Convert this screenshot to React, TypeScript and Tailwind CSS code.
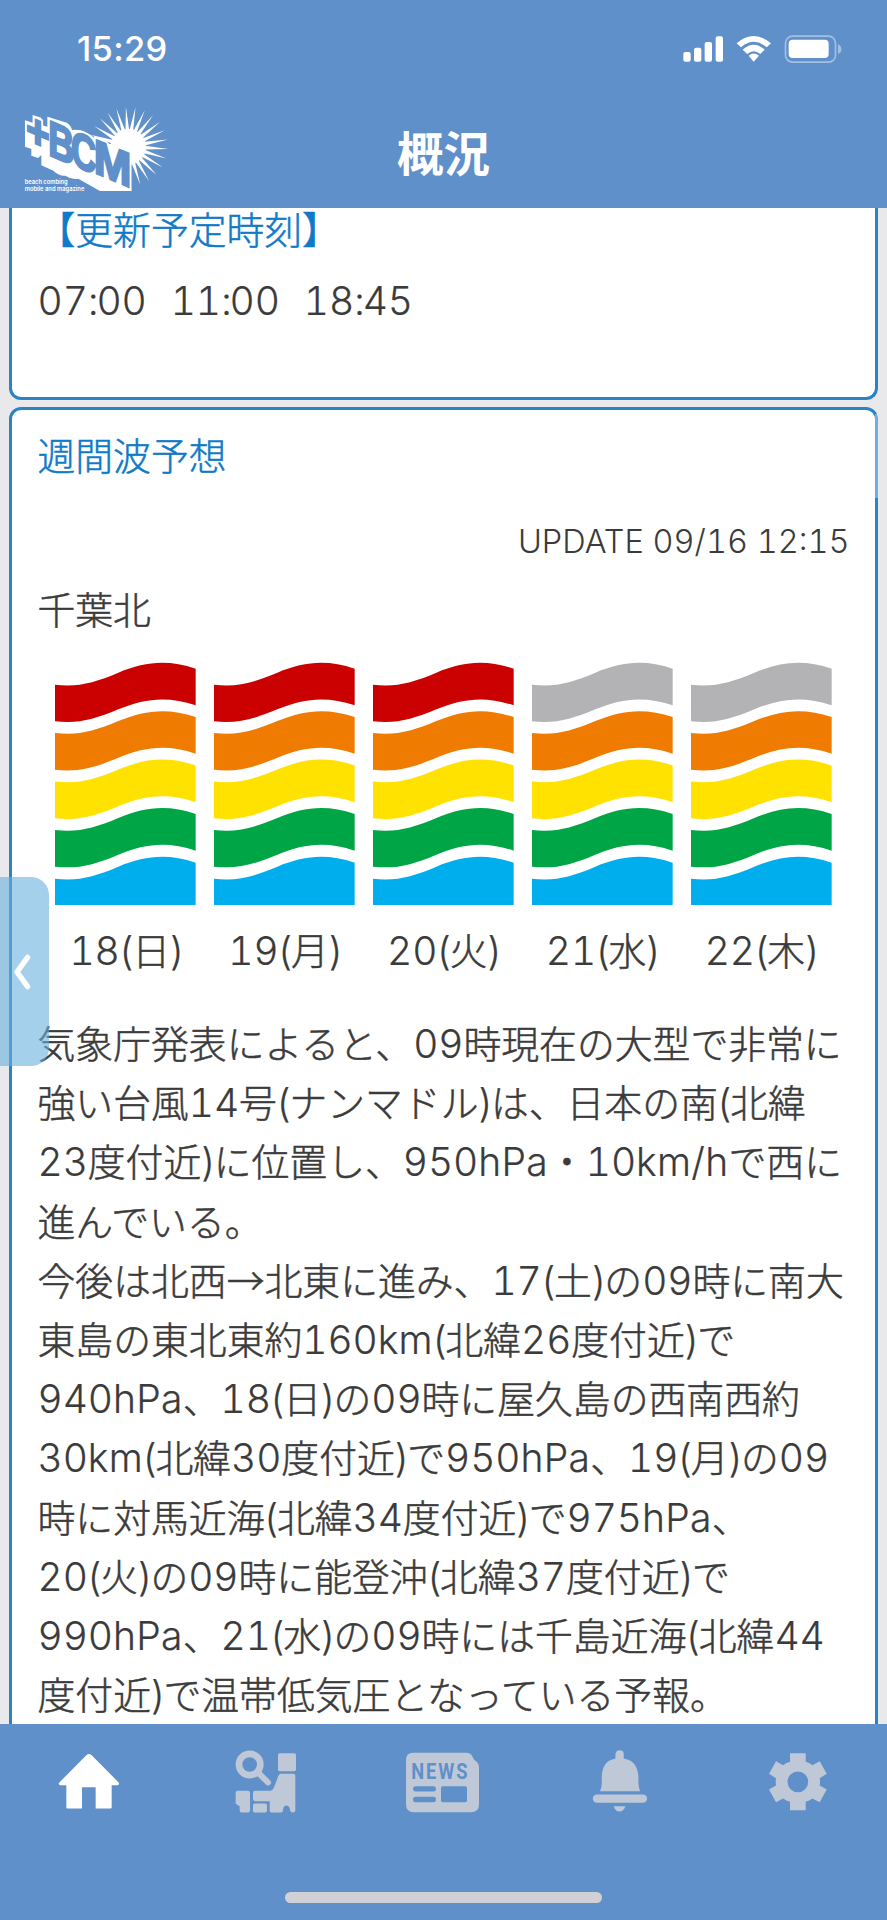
import React from "react";

const days = [
  { label: "18(日)", top: "#cb0000" },
  { label: "19(月)", top: "#cb0000" },
  { label: "20(火)", top: "#cb0000" },
  { label: "21(水)", top: "#b3b3b6" },
  { label: "22(木)", top: "#b3b3b6" },
];

const forecast = [
  "気象庁発表によると、09時現在の大型で非常に",
  "強い台風14号(ナンマドル)は、日本の南(北緯",
  "23度付近)に位置し、950hPa・10km/hで西に",
  "進んでいる。",
  "今後は北西→北東に進み、17(土)の09時に南大",
  "東島の東北東約160km(北緯26度付近)で",
  "940hPa、18(日)の09時に屋久島の西南西約",
  "30km(北緯30度付近)で950hPa、19(月)の09",
  "時に対馬近海(北緯34度付近)で975hPa、",
  "20(火)の09時に能登沖(北緯37度付近)で",
  "990hPa、21(水)の09時には千島近海(北緯44",
  "度付近)で温帯低気圧となっている予報。",
];

const runClass = (part: string) => {
  if (part === ":") return "tracking-[-2.4px]";
  if (part === "(" || part === ")") return "tracking-[-1.2px]";
  if (/[a-z]/i.test(part)) return "tracking-[0.3px]";
  return "tabular-nums tracking-[-0.1px]";
};

// Latin runs are set a little larger than the kana and kanji around them
const Mixed = ({ text }: { text: string }) => (
  <>
    {text.split(/([():]|\d+|[A-Za-z/]+)/).map((part, i) =>
      i % 2 === 1 ? (
        <span
          key={i}
          className={`font-['Inter'] text-[39px] leading-none [-webkit-text-stroke:0.2px] ${runClass(part)}`}
        >
          {part}
        </span>
      ) : (
        part
      )
    )}
  </>
);

const bands = ["#ef7b00", "#ffe200", "#00a645"];

const WaveFlag = ({ top }: { top: string }) => (
  <svg className="h-[244px] w-[141px]" viewBox="0 0 423 732">
    {[top, ...bands].map((color, i) => (
      <path
        key={i}
        transform={`translate(0 ${i * 145.3})`}
        fill={color}
        d="M0 68C70 76 118 62 190 32C270 -2 340 -8 422 20V130C340 102 270 108 190 142C118 172 70 186 0 178Z"
      />
    ))}
    <path fill="#00aeee" d="M0 650C70 658 118 644 190 614C270 580 340 574 422 602V729H0Z" />
  </svg>
);

const rays = Array.from({ length: 26 }, (_, i) => {
  const a = (i * Math.PI * 2) / 26 + 0.06;
  const point = (r: number, t: number) =>
    `${385 + r * Math.cos(t)},${440 + r * Math.sin(t)}`;
  return `${point(50, a - 0.11)} ${point(120, a)} ${point(50, a + 0.11)}`;
});

const letters = [
  { ch: "+", x: 79, y: 430, size: 140, width: 70 },
  { ch: "B", x: 145, y: 464, size: 150, width: 78 },
  { ch: "C", x: 213, y: 493, size: 150, width: 76 },
  { ch: "M", x: 281, y: 517, size: 145, width: 113 },
];

const Word = ({ back }: { back?: boolean }) => (
  <g
    fill={back ? "none" : "#6090ca"}
    stroke={back ? "#fff" : "#6090ca"}
    strokeWidth={back ? 19 : 7}
    fontFamily="'Liberation Sans', sans-serif"
    fontWeight="bold"
  >
    {letters.map((l) => (
      <text
        key={l.ch}
        transform={`matrix(1 .42 0 1 ${l.x} ${l.y})`}
        fontSize={l.size}
        textLength={l.width}
        lengthAdjust="spacingAndGlyphs"
      >
        {l.ch}
      </text>
    ))}
  </g>
);

const Logo = () => (
  <svg className="h-[90px] w-[150px]" viewBox="60 315 450 270">
    <g fill="#fff">
      <circle cx="385" cy="440" r="53" />
      {rays.map((points, i) => (
        <polygon key={i} points={points} />
      ))}
      <path d="M75 361L98 368V345L124 353V375L142 380V350L200 368Q212 374 216 390Q250 385 284 415L391 456V573H300L235 536Q215 540 196 527Q180 530 160 512L124 496V465L114 474L94 467V447L75 440Z" />
    </g>
    <Word back />
    <Word />
    <g fill="#fff" fontFamily="Inter, sans-serif" fontWeight="600" fontSize="19">
      <text x="74" y="552" textLength="129" lengthAdjust="spacingAndGlyphs">
        beach combing
      </text>
      <text x="74" y="573" textLength="179" lengthAdjust="spacingAndGlyphs">
        mobile and magazine
      </text>
    </g>
  </svg>
);

const StatusIcons = () => (
  <svg className="h-[30px] w-[162px]" viewBox="126 100 486 90" fill="#fff">
    <rect x="130" y="154" width="22" height="29" rx="6" />
    <rect x="162" y="141" width="22" height="42" rx="6" />
    <rect x="194" y="124" width="22" height="59" rx="6" />
    <rect x="227" y="107" width="22" height="76" rx="6" />
    <path d="M290 128Q341 84 393 128L380 140Q341 107 303 140Z" />
    <path d="M308 147Q341 118 374 147L361 160Q341 143 322 160Z" />
    <path d="M326 165Q341 152 357 165L341 183Z" />
    <rect x="436.500" y="106.500" width="150" height="78" rx="21" fill="none" stroke="#a3c0e3" strokeWidth="5" />
    <rect x="446" y="117" width="120" height="55" rx="12" />
    <path d="M594 131Q604 135 604 146T594 160Z" fill="#a3c0e3" />
  </svg>
);

const HomeIcon = () => (
  <svg className="h-[67px] w-16" viewBox="170 84 192 200" fill="#fff">
    <path d="M258 105Q266 98 274 105L355 187Q359 194 351 195H334V261Q334 265 330 265H286V201H245V265H202Q198 265 198 261V195H180Q172 194 177 187Z" />
  </svg>
);

const SeatIcon = () => (
  <svg className="h-[67px] w-16" viewBox="702 84 192 200" fill="#bfc8d6">
    <circle cx="749" cy="133" r="32" fill="none" stroke="#bfc8d6" strokeWidth="20" />
    <path d="M775 158L804 187" stroke="#bfc8d6" strokeWidth="18" strokeLinecap="round" />
    <rect x="834" y="99" width="54" height="54" rx="5" />
    <path d="M843 161H880Q886 161 886 167V270Q886 277 879 277Q871 277 870 268Q868 256 858 256Q849 258 849 271Q849 277 843 277H815Q809 277 809 271V243H766Q759 243 759 236V219Q759 212 766 212H811Q818 211 822 202L835 167Q838 161 843 161Z" />
    <path d="M713 212H744Q750 212 750 218V271Q750 277 744 277H725Q719 277 719 271V258L707 251V218Q707 212 713 212Z" />
    <rect x="759" y="250" width="42" height="27" rx="5" />
  </svg>
);

const NewsIcon = () => (
  <svg className="h-[67px] w-[77px]" viewBox="1215 84 231 200">
    <path
      fill="#bfc8d6"
      d="M1240 98H1398Q1414 98 1419 113Q1422 121 1430 125Q1437 131 1437 141V252Q1437 276 1413 276H1242Q1218 276 1218 252V120Q1218 98 1240 98Z"
    />
    <g fill="#6090ca">
      <text
        x="1234"
        y="176"
        fontFamily="Roboto, sans-serif"
        fontWeight="bold"
        fontSize="67"
        letterSpacing="7"
        textLength="174"
        lengthAdjust="spacingAndGlyphs"
      >
        NEWS
      </text>
      <rect x="1239" y="198" width="69" height="16" rx="8" />
      <rect x="1239" y="230" width="69" height="16" rx="8" />
      <rect x="1323" y="198" width="78" height="48" rx="5" />
    </g>
  </svg>
);

const BellIcon = () => (
  <svg className="h-[67px] w-16" viewBox="437.700 144 192 200" fill="#bfc8d6">
    <path d="M517 178V163Q518 150 530 150T542 163V178Z" />
    <path d="M471 273Q476 262 476 248V228Q478 174 530 174T586 228V248Q586 262 591 273Z" />
    <rect x="449" y="283" width="163" height="25" rx="12.500" />
    <path d="M512 318H547Q541 334 529 334T512 318Z" />
  </svg>
);

const GearIcon = () => (
  <svg className="h-[67px] w-16" viewBox="969.900 144 192 200" fill="#bfc8d6">
    <path
      fillRule="evenodd"
      d="M1042 159H1089V185Q1100 188 1109 195L1131 183L1152 221L1131 234Q1133 245 1131 256L1152 268L1131 306L1109 295Q1100 302 1089 305V330H1042V305Q1031 302 1021 295L1000 306L979 268L1000 256Q998 245 1000 234L979 221L1000 183L1021 195Q1031 188 1042 185ZM1065.500 214A31 31 0 1 0 1065.500 276A31 31 0 1 0 1065.500 214Z"
    />
  </svg>
);

const navIcons = [HomeIcon, SeatIcon, NewsIcon, BellIcon, GearIcon];

const App = () => {
  return (
    <div className="relative flex h-[1920px] w-[887px] flex-col overflow-hidden bg-[#e9e8ea] font-['Noto_Sans_CJK_JP',sans-serif] font-light text-[#3b3b3b]">
      {/* Header */}
      <header className="flex h-[208px] shrink-0 flex-col bg-[#6090ca] text-white">
        <div className="flex h-[97px] items-center justify-between pl-[77px] pr-[43px]">
          <span className="font-['Inter'] text-[34.5px] font-medium tracking-[0.3px]">
            15:29
          </span>
          <StatusIcons />
        </div>
        <div className="grid grid-cols-3 items-start">
          <div className="pl-5 pt-2">
            <Logo />
          </div>
          <h1 className="pt-[29px] text-center text-[46.5px] font-bold leading-[50px]">
            概況
          </h1>
        </div>
      </header>

      {/* Scrolled content */}
      <main className="flex h-[1516px] shrink-0 flex-col gap-[7px] overflow-hidden pl-[9px] pr-[9px] [-webkit-text-stroke:0.5px]">
        <section className="h-[192px] shrink-0 rounded-b-xl border-x-[3px] border-b-[3px] border-[#2a83c4] bg-white pl-[25.5px]">
          <h2 className="h-[44px] text-[37.8px] leading-[40px] text-[#0e7ac8]">
            【更新予定時刻】
          </h2>
          <p className="mt-[25px] flex gap-6 text-[37.8px] leading-[44px]">
            <span><Mixed text="07:00" /></span>
            <span><Mixed text="11:00" /></span>
            <span><Mixed text="18:45" /></span>
          </p>
        </section>

        <section className="h-[1400px] shrink-0 rounded-t-xl border-[3px] border-[#2a83c4] bg-white pl-[25.5px] pr-[25.5px]">
          <h2 className="pt-[22px] text-[37.8px] leading-[44px] text-[#0e7ac8]">
            週間波予想
          </h2>
          <p className="mt-[46px] text-right font-['Inter'] text-[32.5px] leading-[40px] tabular-nums [-webkit-text-stroke:0]">
            UPDATE 09/16 12:15
          </p>
          <p className="mt-[24px] text-[37.8px] leading-[44px]">千葉北</p>
          <div className="mt-[32px] grid w-[803px] grid-cols-5 pl-[9px]">
            {days.map((day) => (
              <div className="flex flex-col items-center" key={day.label}>
                <WaveFlag top={day.top} />
                <span className="mt-[21px] whitespace-nowrap text-[37.8px] leading-[44px]">
                  <Mixed text={day.label} />
                </span>
              </div>
            ))}
          </div>
          <div className="mt-[41px] text-[37.85px]">
            {forecast.map((line) => (
              <p className="h-[59.2px] whitespace-nowrap leading-[59.2px]" key={line}>
                <Mixed text={line} />
              </p>
            ))}
          </div>
        </section>
      </main>

      {/* Bottom navigation */}
      <nav className="flex grow flex-col items-center bg-[#6090ca]">
        <div className="grid w-full grid-cols-5 justify-items-center pt-6">
          {navIcons.map((Icon, i) => (
            <Icon key={i} />
          ))}
        </div>
        <div className="mt-[77px] h-[11px] w-[317px] rounded-full bg-[#d1d1d5]" />
      </nav>

      {/* Drawer handle */}
      <button className="absolute left-0 top-[877px] flex h-[189px] w-[49px] items-center rounded-r-[18px] bg-[#69b1de]/60 pl-[13px]">
        <svg className="h-9 w-[18px]" viewBox="0 0 18 36" fill="none" stroke="#fff" strokeWidth="5.500" strokeLinecap="round" strokeLinejoin="round">
          <path d="M14.500 3.500L4 18L14.500 32.500" />
        </svg>
      </button>
      <div className="absolute right-[9px] top-[414px] h-[84px] w-[3px] bg-white/35" />
    </div>
  );
};

export default App;
